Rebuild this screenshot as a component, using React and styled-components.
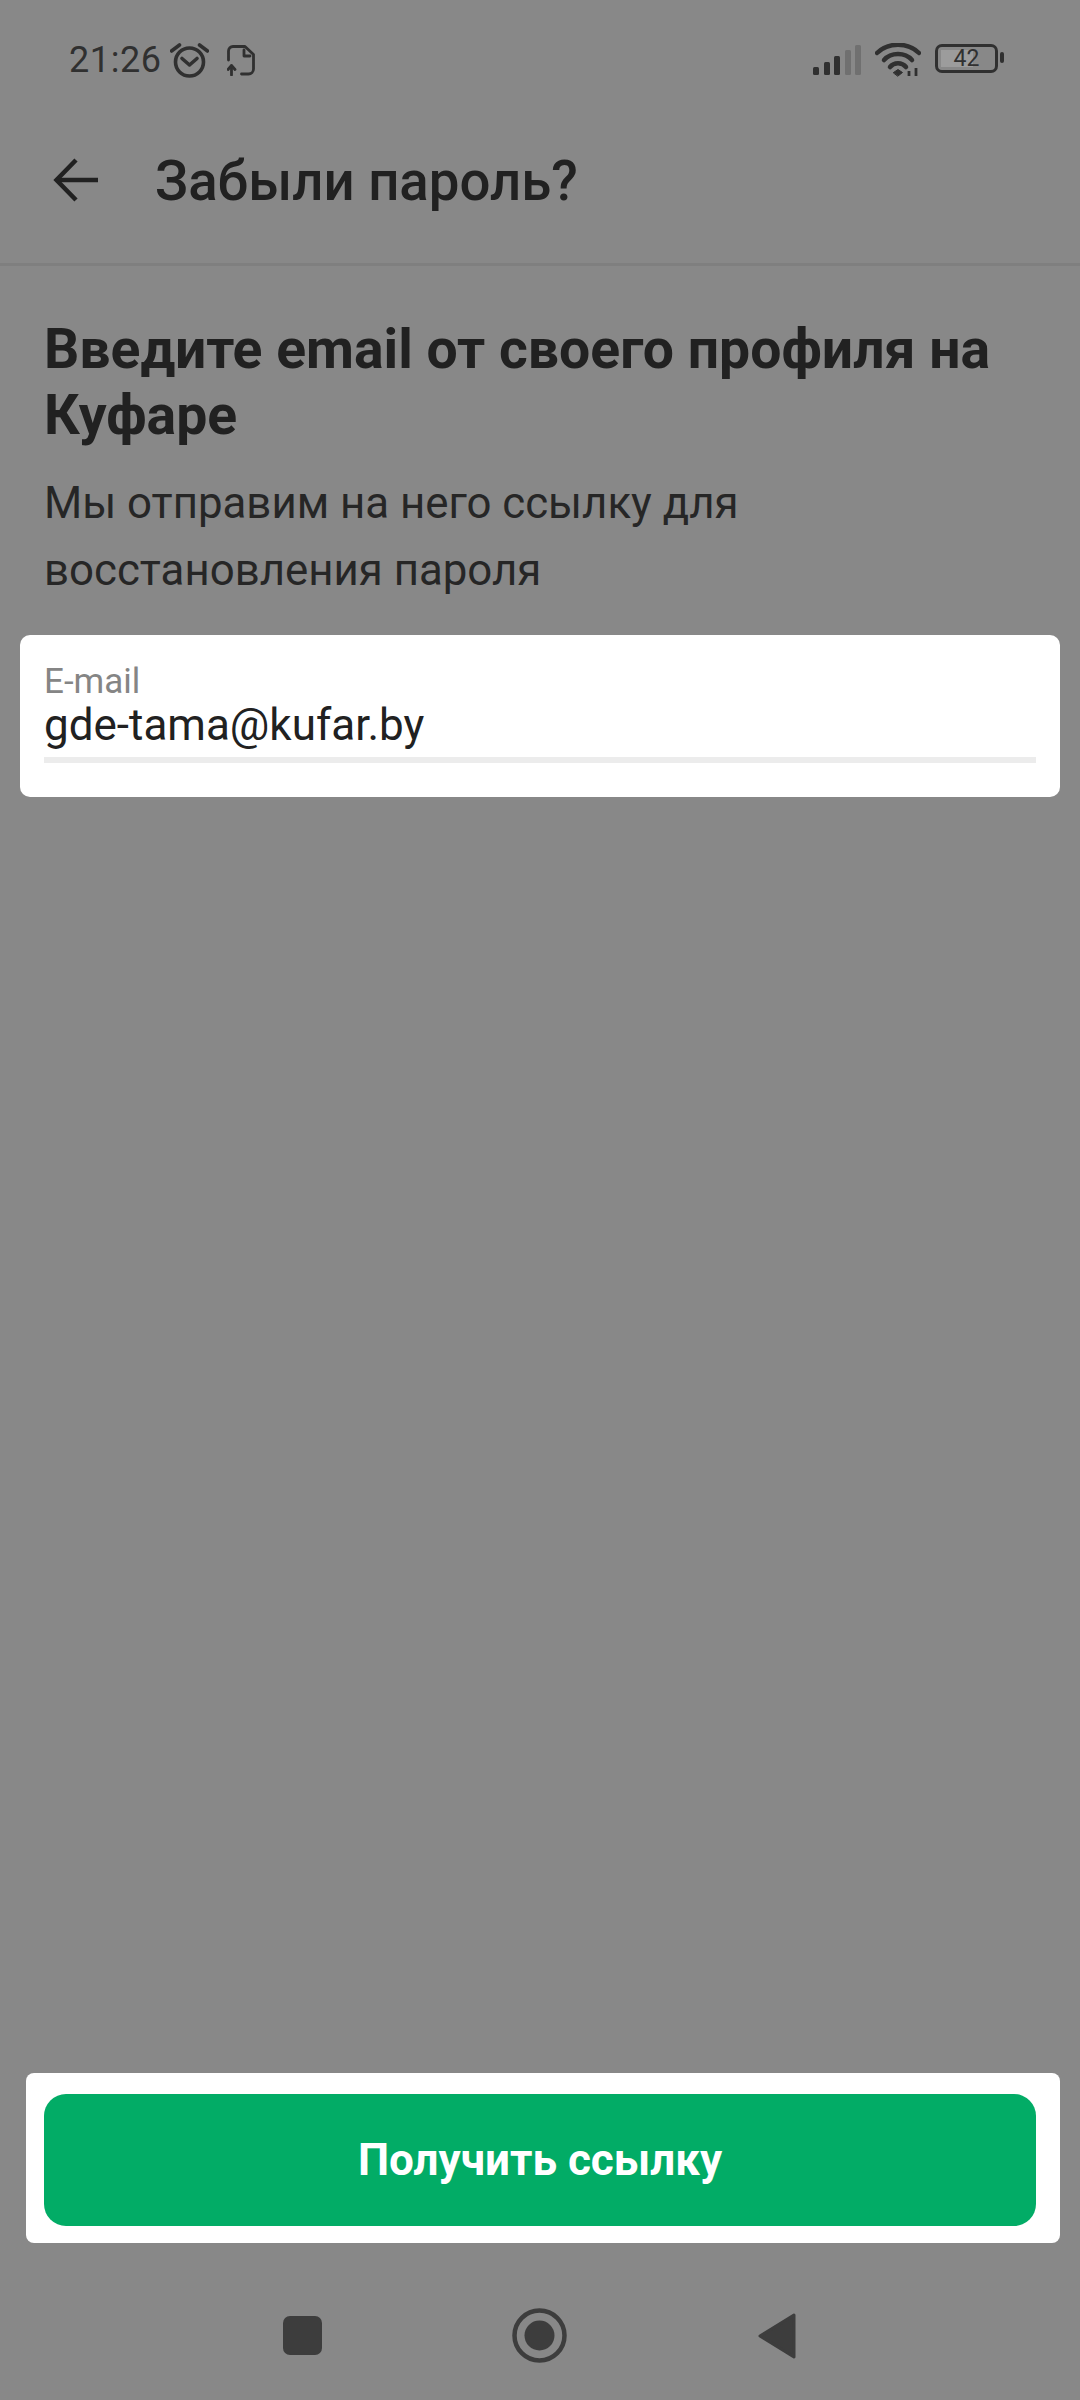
import React from 'react';
import styled, { createGlobalStyle } from 'styled-components';

const Global = createGlobalStyle`
  html, body {
    margin: 0;
    padding: 0;
    background: #888888;
  }
  * {
    box-sizing: border-box;
  }
`;

const Page = styled.div`
  width: 1080px;
  height: 2400px;
  display: flex;
  flex-direction: column;
  background: #888888;
  font-family: Roboto, "Noto Sans", sans-serif;
  color: #212121;
  overflow: hidden;
`;

const StatusBar = styled.div`
  height: 120px;
  padding: 0 76px 0 69px;
  display: flex;
  align-items: center;
  color: #303030;
`;

const Time = styled.span`
  font-size: 36px;
  letter-spacing: 0.6px;
  margin-right: 8px;
`;

const NotifyIcons = styled.div`
  display: flex;
  align-items: center;
  gap: 18px;
`;

const StatusRight = styled.div`
  margin-left: auto;
  display: flex;
  align-items: center;
  gap: 14px;
`;

const Battery = styled.div`
  position: relative;
  width: 63px;
  height: 29px;
  margin: -3px 6px 0 0;
  border: 3px solid #303030;
  border-radius: 7px;
  display: flex;
  align-items: center;
  justify-content: center;
  font-size: 23px;
  color: #303030;
  &::after {
    content: '';
    position: absolute;
    right: -9px;
    top: 5px;
    width: 4px;
    height: 11px;
    border-radius: 2px;
    background: #303030;
  }
`;

const BatteryLevel = styled.div`
  position: absolute;
  left: 3px;
  top: 3px;
  bottom: 3px;
  background: #9c9c9c;
`;

const BatteryText = styled.span`
  position: relative;
`;

const Header = styled.div`
  height: 146px;
  display: flex;
  align-items: center;
  padding: 0 0 21px 53px;
  border-bottom: 3px solid #7f7f7f;
`;

const BackButton = styled.div`
  width: 102px;
  height: 46px;
  display: flex;
  align-items: center;
  margin-top: -3px;
`;

const HeaderTitle = styled.div`
  font-size: 54.6px;
  font-weight: 500;
  line-height: 60px;
`;

const Intro = styled.div`
  padding: 51px 44px 0;
`;

const Heading = styled.div`
  font-size: 55.3px;
  font-weight: 700;
  line-height: 66px;
`;

const Subtitle = styled.div`
  margin-top: 21px;
  font-size: 43.8px;
  line-height: 67px;
  color: #262626;
`;

const Field = styled.div`
  margin: 31px 20px 0;
  height: 162px;
  padding: 29px 24px 0;
  background: #ffffff;
  border-radius: 10px;
`;

const FieldLabel = styled.div`
  font-size: 35px;
  line-height: 36px;
  color: #858585;
`;

const FieldValue = styled.div`
  font-size: 44px;
  line-height: 50px;
  height: 63px;
  color: #212121;
  border-bottom: 6px solid #ececec;
`;

const Footer = styled.div`
  margin: auto 20px 0 26px;
  height: 170px;
  padding: 21px 24px 0 18px;
  background: #ffffff;
  border-radius: 8px;
`;

const SubmitButton = styled.div`
  height: 132px;
  display: flex;
  align-items: center;
  justify-content: center;
  border-radius: 22px;
  background: #02ac66;
  color: #ffffff;
  font-size: 44px;
  font-weight: 700;
`;

const NavBar = styled.div`
  height: 157px;
  display: flex;
  align-items: center;
  padding: 28px 0 0 184px;
`;

const NavSlot = styled.div`
  flex: 0 0 237px;
  display: flex;
  justify-content: center;
`;

const AlarmIcon = () => (
  <svg width="39" height="36" viewBox="0 0 39 36" fill="none" stroke="#303030" strokeWidth="3.6" strokeLinecap="round" strokeLinejoin="round">
    <circle cx="19.5" cy="20" r="14" />
    <path d="M12 16.500l7.500 6.500 7.500-6.500" />
    <path d="M1.500 9l8-6" />
    <path d="M37.500 9l-8-6" />
  </svg>
);

const FileUploadIcon = () => (
  <svg width="28" height="31" viewBox="0 0 28 31" fill="none" stroke="#303030" strokeWidth="2.800" strokeLinecap="round" strokeLinejoin="round">
    <path d="M1.500 15V6a4.500 4.500 0 0 1 4.500-4.500h12l8.500 8V24a5 5 0 0 1-5 5h-7" />
    <path d="M17 5v6h6" />
    <path d="M4.500 30V21" />
    <path d="M1 24.500L4.500 20.500 8 24.500" />
  </svg>
);

const SignalIcon = () => (
  <svg width="48" height="30" viewBox="0 0 48 30">
    <rect x="0" y="22" width="6" height="8" rx="1.500" fill="#303030" />
    <rect x="11" y="17" width="6" height="13" rx="1.500" fill="#303030" />
    <rect x="21" y="11" width="6" height="19" rx="1.500" fill="#303030" />
    <rect x="32" y="5" width="6" height="25" rx="1.500" fill="#707070" />
    <rect x="42" y="0" width="6" height="30" rx="1.500" fill="#707070" />
  </svg>
);

const WifiIcon = () => (
  <svg width="46" height="34" viewBox="0 0 46 34" fill="none" stroke="#303030" strokeWidth="4.500" strokeLinecap="round">
    <path d="M2 10C13 -1 33 -1 44 10" />
    <path d="M9 17C16 9 30 9 37 17" />
    <path d="M15 24C19 19 27 19 31 24" />
    <path d="M18.500 29.500l4.500-3 4.500 3-4.500 3.500z" fill="#303030" strokeWidth="1" />
    <path d="M34 33v-5" strokeWidth="2.800" strokeLinecap="butt" />
    <path d="M41 33v-8" strokeWidth="2.800" strokeLinecap="butt" />
  </svg>
);

const BackArrow = () => (
  <svg width="46" height="44" viewBox="0 0 46 44" fill="none" stroke="#212121" strokeWidth="4.500">
    <path d="M3 22H45" />
    <path d="M23 2L3.500 22 23 42" />
  </svg>
);

const batteryFill = 42 * 0.75;

const App = () => (
  <>
    <Global />
    <Page>
      <StatusBar>
        <Time>21:26</Time>
        <NotifyIcons>
          <AlarmIcon />
          <FileUploadIcon />
        </NotifyIcons>
        <StatusRight>
          <SignalIcon />
          <WifiIcon />
          <Battery>
            <BatteryLevel style={{ width: `${batteryFill}px` }} />
            <BatteryText>42</BatteryText>
          </Battery>
        </StatusRight>
      </StatusBar>
      <Header>
        <BackButton>
          <BackArrow />
        </BackButton>
        <HeaderTitle>Забыли пароль?</HeaderTitle>
      </Header>
      <Intro>
        <Heading>Введите email от своего профиля на Куфаре</Heading>
        <Subtitle>Мы отправим на него ссылку для восстановления пароля</Subtitle>
      </Intro>
      <Field>
        <FieldLabel>E-mail</FieldLabel>
        <FieldValue>gde-tama@kufar.by</FieldValue>
      </Field>
      <Footer>
        <SubmitButton>Получить ссылку</SubmitButton>
      </Footer>
      <NavBar>
        <NavSlot>
          <svg width="39" height="39" viewBox="0 0 39 39">
            <rect width="39" height="39" rx="7" fill="#3d3d3d" />
          </svg>
        </NavSlot>
        <NavSlot>
          <svg width="55" height="55" viewBox="0 0 55 55">
            <circle cx="27.500" cy="27.500" r="25" fill="none" stroke="#3d3d3d" strokeWidth="4.500" />
            <circle cx="27.500" cy="27.500" r="15" fill="#3d3d3d" />
          </svg>
        </NavSlot>
        <NavSlot>
          <svg width="38" height="46" viewBox="0 0 38 46">
            <path d="M36 2L2 23l34 21z" fill="#3d3d3d" stroke="#3d3d3d" strokeWidth="3" strokeLinejoin="round" />
          </svg>
        </NavSlot>
      </NavBar>
    </Page>
  </>
);

export default App;
